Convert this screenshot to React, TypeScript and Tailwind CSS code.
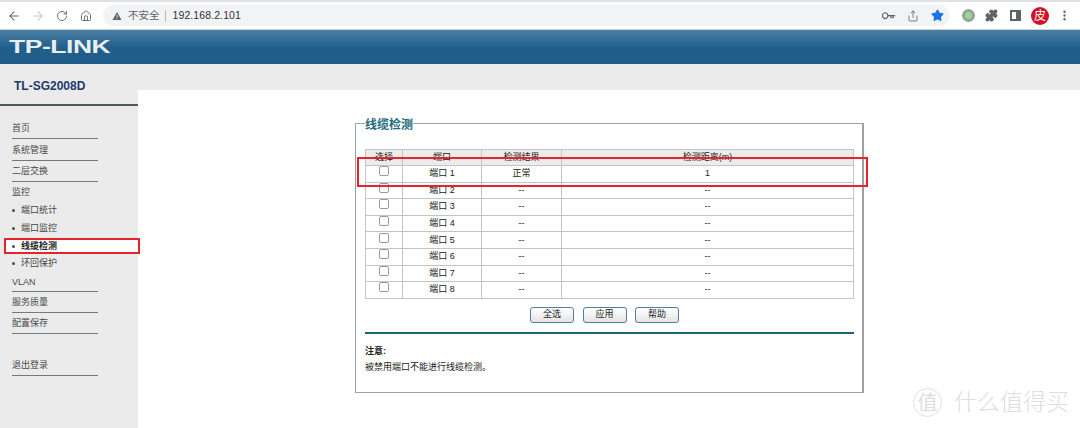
import { ArrowLeft, ArrowRight, RotateCw, Home, Key, Share, Star, Puzzle, MoreVertical } from "lucide-react";

const font = "font-['Liberation_Sans','Noto_Sans_CJK_SC',sans-serif]";

function MenuItem({ label, h, line = true }: { label: string; h: string; line?: boolean }) {
  return (
    <div className={`${h} w-[86px] flex items-center pt-[1px] text-[9px] leading-none text-[#4a4a4a] ${line ? "border-b-[1px] border-[#6f7b80]" : ""}`}>
      {label}
    </div>
  );
}

function SubItem({ label, h }: { label: string; h: string }) {
  return (
    <div className={`${h} flex items-center gap-[6px] text-[9px] leading-none text-[#444]`}>
      <span className="w-[3px] h-[3px] rounded-full bg-[#44505c]" />
      <span>{label}</span>
    </div>
  );
}

const ports = [1, 2, 3, 4, 5, 6, 7, 8];
const cell = "border border-[#c4c4c4] text-center p-0 align-middle";

function Btn({ label }: { label: string }) {
  return (
    <button className="w-[44px] h-[16px] rounded-[3px] border border-[#4f7e9f] bg-gradient-to-b from-white to-[#e4e4e4] text-[9px] leading-none text-[#222]">
      {label}
    </button>
  );
}

export default function App() {
  return (
    <div className={`${font} relative w-[1080px] h-[428px] overflow-hidden bg-white`}>
      {/* browser chrome */}
      <div className="h-[2px] bg-[#dee1e6]" />
      <div className="h-[28px] bg-white flex items-center pl-[7px] border-b border-[#c9d3da]">
        <ArrowLeft size={14} strokeWidth={1.8} className="text-[#5f6368]" />
        <ArrowRight size={14} strokeWidth={1.8} className="text-[#c0c3c6] ml-[10px]" />
        <RotateCw size={12} strokeWidth={1.8} className="text-[#5f6368] ml-[11px]" />
        <Home size={12} strokeWidth={1.8} className="text-[#5f6368] ml-[12px]" />
        <div className="ml-[11px] w-[847px] h-[21px] rounded-full bg-[#f1f3f4] flex items-center pl-[9px] pr-[6px]">
          <svg width="10" height="10" viewBox="0 0 10 10" className="text-[#5f6368]">
            <path d="M5 1 L9.5 9 H0.5 Z" fill="currentColor" />
            <rect x="4.6" y="3.8" width="0.9" height="2.6" fill="#f1f3f4" />
            <rect x="4.6" y="7" width="0.9" height="0.9" fill="#f1f3f4" />
          </svg>
          <span className="ml-[6px] text-[10.5px] text-[#5f6368] leading-none">不安全</span>
          <span className="ml-[5px] w-px h-[12px] bg-[#b5b8bb]" />
          <span className="ml-[7px] text-[10.5px] text-[#303134] leading-none tracking-[0.1px]">192.168.2.101</span>
          <div className="ml-auto flex items-center">
            <Key size={12} strokeWidth={2.2} className="text-[#5f6368] rotate-45" />
            <Share size={12} strokeWidth={1.6} className="text-[#5f6368] ml-[13px]" />
            <Star size={13} className="text-[#1a73e8] ml-[12px]" fill="#1a73e8" />
          </div>
        </div>
        <div className="ml-[12px] w-[13px] h-[13px] rounded-full bg-[#9aa09c] flex items-center justify-center">
          <span className="w-[7px] h-[7px] rounded-full bg-[#8fdc8f]" />
        </div>
        <Puzzle size={13} className="text-[#5f6368] ml-[10px]" fill="#5f6368" />
        <div className="ml-[12px] w-[11px] h-[11px] border-[2px] border-[#5f6368] flex justify-end">
          <span className="w-[3px] h-full bg-[#5f6368]" />
        </div>
        <div className="ml-[10px] w-[18px] h-[18px] rounded-full bg-[#d50f25] flex items-center justify-center text-[12px] leading-none text-white">皮</div>
        <MoreVertical size={13} strokeWidth={2.4} className="text-[#5f6368] ml-[9px]" />
      </div>

      {/* banner */}
      <div className="h-[34px] bg-gradient-to-b from-[#4a7fa3] via-[#22608c] to-[#1f5c89] flex items-center pl-[9px]">
        <span className="origin-left scale-x-[1.47] text-[18px] font-bold leading-none tracking-[-0.3px] text-[#e9eef2]">TP-LINK</span>
      </div>

      <div className="flex h-[364px]">
        {/* sidebar */}
        <div className="w-[138px] h-full bg-[#ebebeb] shrink-0 flex flex-col">
          <div className="h-[42px] border-b-2 border-[#4f5a60] flex items-start pl-[14px] pt-[16px] text-[12px] leading-none font-bold text-[#1c3a6b]">
            TL-SG2008D
          </div>
          <div className="pl-[12px] pt-[11px] flex flex-col">
            <MenuItem label="首页" h="h-[22px]" />
            <MenuItem label="系统管理" h="h-[22px]" />
            <MenuItem label="二层交换" h="h-[21px]" />
            <MenuItem label="监控" h="h-[20px]" line={false} />
            <SubItem label="端口统计" h="h-[17px]" />
            <SubItem label="端口监控" h="h-[19px]" />
            <div className="relative z-10 -ml-[8px] w-[136px] h-[16px] shrink-0 border-2 border-[#e4252b] bg-white flex items-center pl-[6px] gap-[6px] text-[9px] leading-none font-bold text-[#222]">
              <span className="w-[3px] h-[3px] rounded-full bg-[#44505c]" />
              <span>线缆检测</span>
            </div>
            <SubItem label="环回保护" h="h-[19px]" />
            <MenuItem label="VLAN" h="h-[19px]" />
            <MenuItem label="服务质量" h="h-[21px]" />
            <MenuItem label="配置保存" h="h-[21px]" />
            <div className="h-[20px]" />
            <MenuItem label="退出登录" h="h-[22px]" />
          </div>
        </div>

        {/* content */}
        <div className="flex-1 flex flex-col">
          <div className="h-[26px] bg-[#ebebeb]" />
          <div className="flex-1 bg-white pl-[217px] pt-[24px]">
            <fieldset className="w-[509px] h-[279px] border-2 border-t-[1px] border-[#9ba1a5] border-l-[1px] border-b-[1px] pl-[9px] pr-[8px] m-0 min-w-0">
              <legend className="text-[12px] leading-[14px] font-bold text-[#1f6b7c] pt-[4px] ml-0">线缆检测</legend>
              <table className="w-[489px] h-[149px] mt-[17px] border-collapse table-fixed text-[9px] leading-none text-[#222]">
                <colgroup>
                  <col className="w-[37px]" />
                  <col className="w-[79px]" />
                  <col className="w-[80px]" />
                  <col />
                </colgroup>
                <thead>
                  <tr className="h-[16px] bg-[#ececec]">
                    <th className={`${cell} font-normal`}>选择</th>
                    <th className={`${cell} font-normal`}>端口</th>
                    <th className={`${cell} font-normal`}>检测结果</th>
                    <th className={`${cell} font-normal`}>检测距离(m)</th>
                  </tr>
                </thead>
                <tbody>
                  {ports.map((p) => (
                    <tr key={p} className="h-[16.6px]">
                      <td className={cell}>
                        <div className="w-[10px] h-[10px] mx-auto -mt-[5px] rounded-[2px] border border-[#9a9a9a] bg-white" />
                      </td>
                      <td className={cell}>端口 {p}</td>
                      <td className={cell}>{p === 1 ? "正常" : "--"}</td>
                      <td className={cell}>{p === 1 ? "1" : "--"}</td>
                    </tr>
                  ))}
                </tbody>
              </table>
              <div className="w-[489px] mt-[8px] pr-[10px] flex justify-center gap-[8.5px]">
                <Btn label="全选" />
                <Btn label="应用" />
                <Btn label="帮助" />
              </div>
              <div className="w-[489px] mt-[9px] border-t-[2px] border-[#1c6570]" />
              <div className="mt-[13px] text-[9px] leading-none font-bold text-[#222]">注意:</div>
              <div className="mt-[7px] text-[9px] leading-none text-[#222]">被禁用端口不能进行线缆检测。</div>
            </fieldset>
          </div>
        </div>
      </div>

      {/* red annotation over the table */}
      <div className="absolute left-[357px] top-[157px] w-[511px] h-[30px] border-2 border-[#e4252b]" />

      {/* watermark */}
      <div className="absolute left-[913px] top-[388px] flex items-center text-[#dedede] leading-none">
        <span className="w-[29px] h-[29px] rounded-full border border-[#e0e0e0] flex items-center justify-center text-[20px]">值</span>
        <span className="ml-[12px] text-[23px] font-light">什么值得买</span>
      </div>
    </div>
  );
}
